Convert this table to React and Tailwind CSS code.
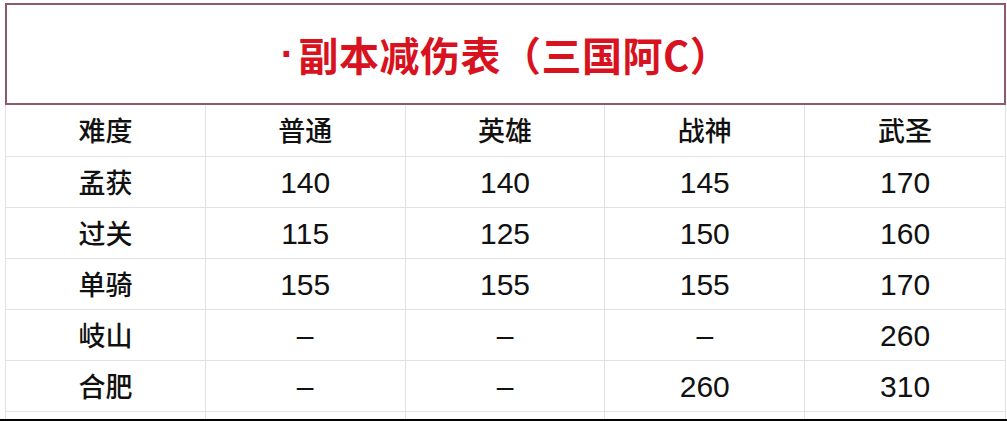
import React from 'react';

const headers = ['难度', '普通', '英雄', '战神', '武圣'];

const rows = [
  ['孟获', '140', '140', '145', '170'],
  ['过关', '115', '125', '150', '160'],
  ['单骑', '155', '155', '155', '170'],
  ['岐山', '–', '–', '–', '260'],
  ['合肥', '–', '–', '260', '310'],
];

const cjk = { fontFamily: '"Noto Sans CJK SC", sans-serif' };
const num = { fontFamily: '"Liberation Sans", "Noto Sans CJK SC", sans-serif' };

const Cell = ({ children, isText, last }) => (
  <div
    className={`h-[51px] flex items-center justify-center border-b border-[#e2e2e2] text-[#111] ${last ? '' : 'border-r'} ${
      isText ? 'text-[27px] font-medium' : 'text-[30px]'
    }`}
    style={isText ? cjk : num}
  >
    {children}
  </div>
);

const App = () => {
  return (
    <div className="w-[1007px] h-[421px] bg-white overflow-hidden flex flex-col">
      <div className="flex-1 pl-[5px] pr-[1px] pt-[3px] overflow-hidden">
        {/* Title */}
        <div className="h-[102px] border-2 border-[#8c5a68] flex items-center justify-center">
          <h1 className="text-[40px] font-bold text-[#d8121e] tracking-[0.5px] flex items-center" style={cjk}>
            <span className="mr-[4px]" style={num}>·</span>
            副本减伤表（三国阿C）
          </h1>
        </div>

        {/* Table */}
        <div className="grid grid-cols-5 border-l border-r border-[#e2e2e2]">
          {headers.map((h, i) => (
            <div
              key={h}
              className={`h-[52px] flex items-center justify-center border-b border-[#e2e2e2] text-[27px] font-medium text-[#111] ${
                i === 4 ? '' : 'border-r'
              }`}
              style={cjk}
            >
              {h}
            </div>
          ))}
          {rows.map((r) =>
            r.map((v, i) => (
              <Cell key={r[0] + i} isText={i === 0} last={i === 4}>
                {v}
              </Cell>
            ))
          )}
          {headers.map((h, i) => (
            <div key={'e' + h} className={`h-[20px] border-[#e2e2e2] ${i === 4 ? '' : 'border-r'}`}></div>
          ))}
        </div>
      </div>
      <div className="h-[2px] bg-black"></div>
    </div>
  );
};

export default App;
